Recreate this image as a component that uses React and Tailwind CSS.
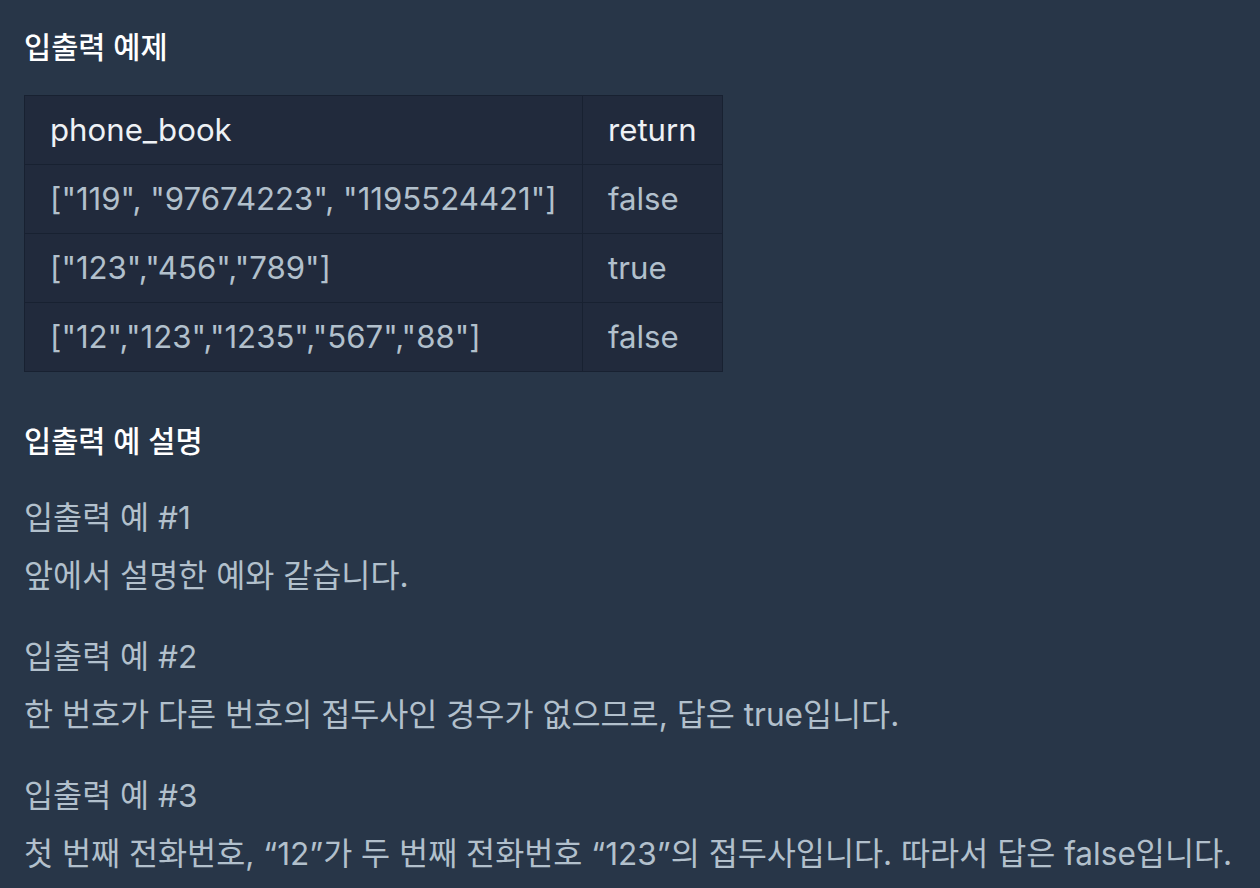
import React from 'react';

const rows = [
  ['["119", "97674223", "1195524421"]', 'false'],
  ['["123","456","789"]', 'true'],
  ['["12","123","1235","567","88"]', 'false'],
];

const examples = [
  ['입출력 예 #1', '앞에서 설명한 예와 같습니다.'],
  ['입출력 예 #2', '한 번호가 다른 번호의 접두사인 경우가 없으므로, 답은 true입니다.'],
  ['입출력 예 #3', '첫 번째 전화번호, “12”가 두 번째 전화번호 “123”의 접두사입니다. 따라서 답은 false입니다.'],
];

const font = { fontFamily: 'Inter, "Noto Sans CJK KR", sans-serif' };

export default function App() {
  return (
    <div className="min-h-[888px] w-[1260px] overflow-hidden bg-[#283648] pl-[24px] pt-[27px]" style={font}>
      {/* 입출력 예제 */}
      <h5 className="text-[29.5px] leading-[40px] font-medium text-white">입출력 예제</h5>

      <table className="mt-[28px] border-collapse border border-[#182131] bg-[#212a3c] text-[31.2px]">
        <thead>
          <tr>
            <th className="h-[69px] w-[558px] border border-[#182131] px-[25px] text-left font-normal text-[#eef1f5]">phone_book</th>
            <th className="h-[69px] w-[137px] border border-[#182131] px-[25px] text-left font-normal text-[#eef1f5]">return</th>
          </tr>
        </thead>
        <tbody>
          {rows.map(([book, ret], i) => (
            <tr key={i}>
              <td className="h-[69px] whitespace-nowrap border border-[#182131] px-[25px] text-[#b2c0cc]">{book}</td>
              <td className="h-[69px] border border-[#182131] px-[25px] text-[#b2c0cc]">{ret}</td>
            </tr>
          ))}
        </tbody>
      </table>

      {/* 입출력 예 설명 */}
      <h5 className="mt-[49px] text-[29.5px] leading-[40px] font-medium text-white">입출력 예 설명</h5>

      <div className="mt-[28px] flex flex-col gap-[23px]">
        {examples.map(([title, desc]) => (
          <p key={title} className="whitespace-nowrap text-[31.6px] leading-[58px] text-[#b2c0cc]">
            {title}
            <br />
            {desc}
          </p>
        ))}
      </div>
    </div>
  );
}
